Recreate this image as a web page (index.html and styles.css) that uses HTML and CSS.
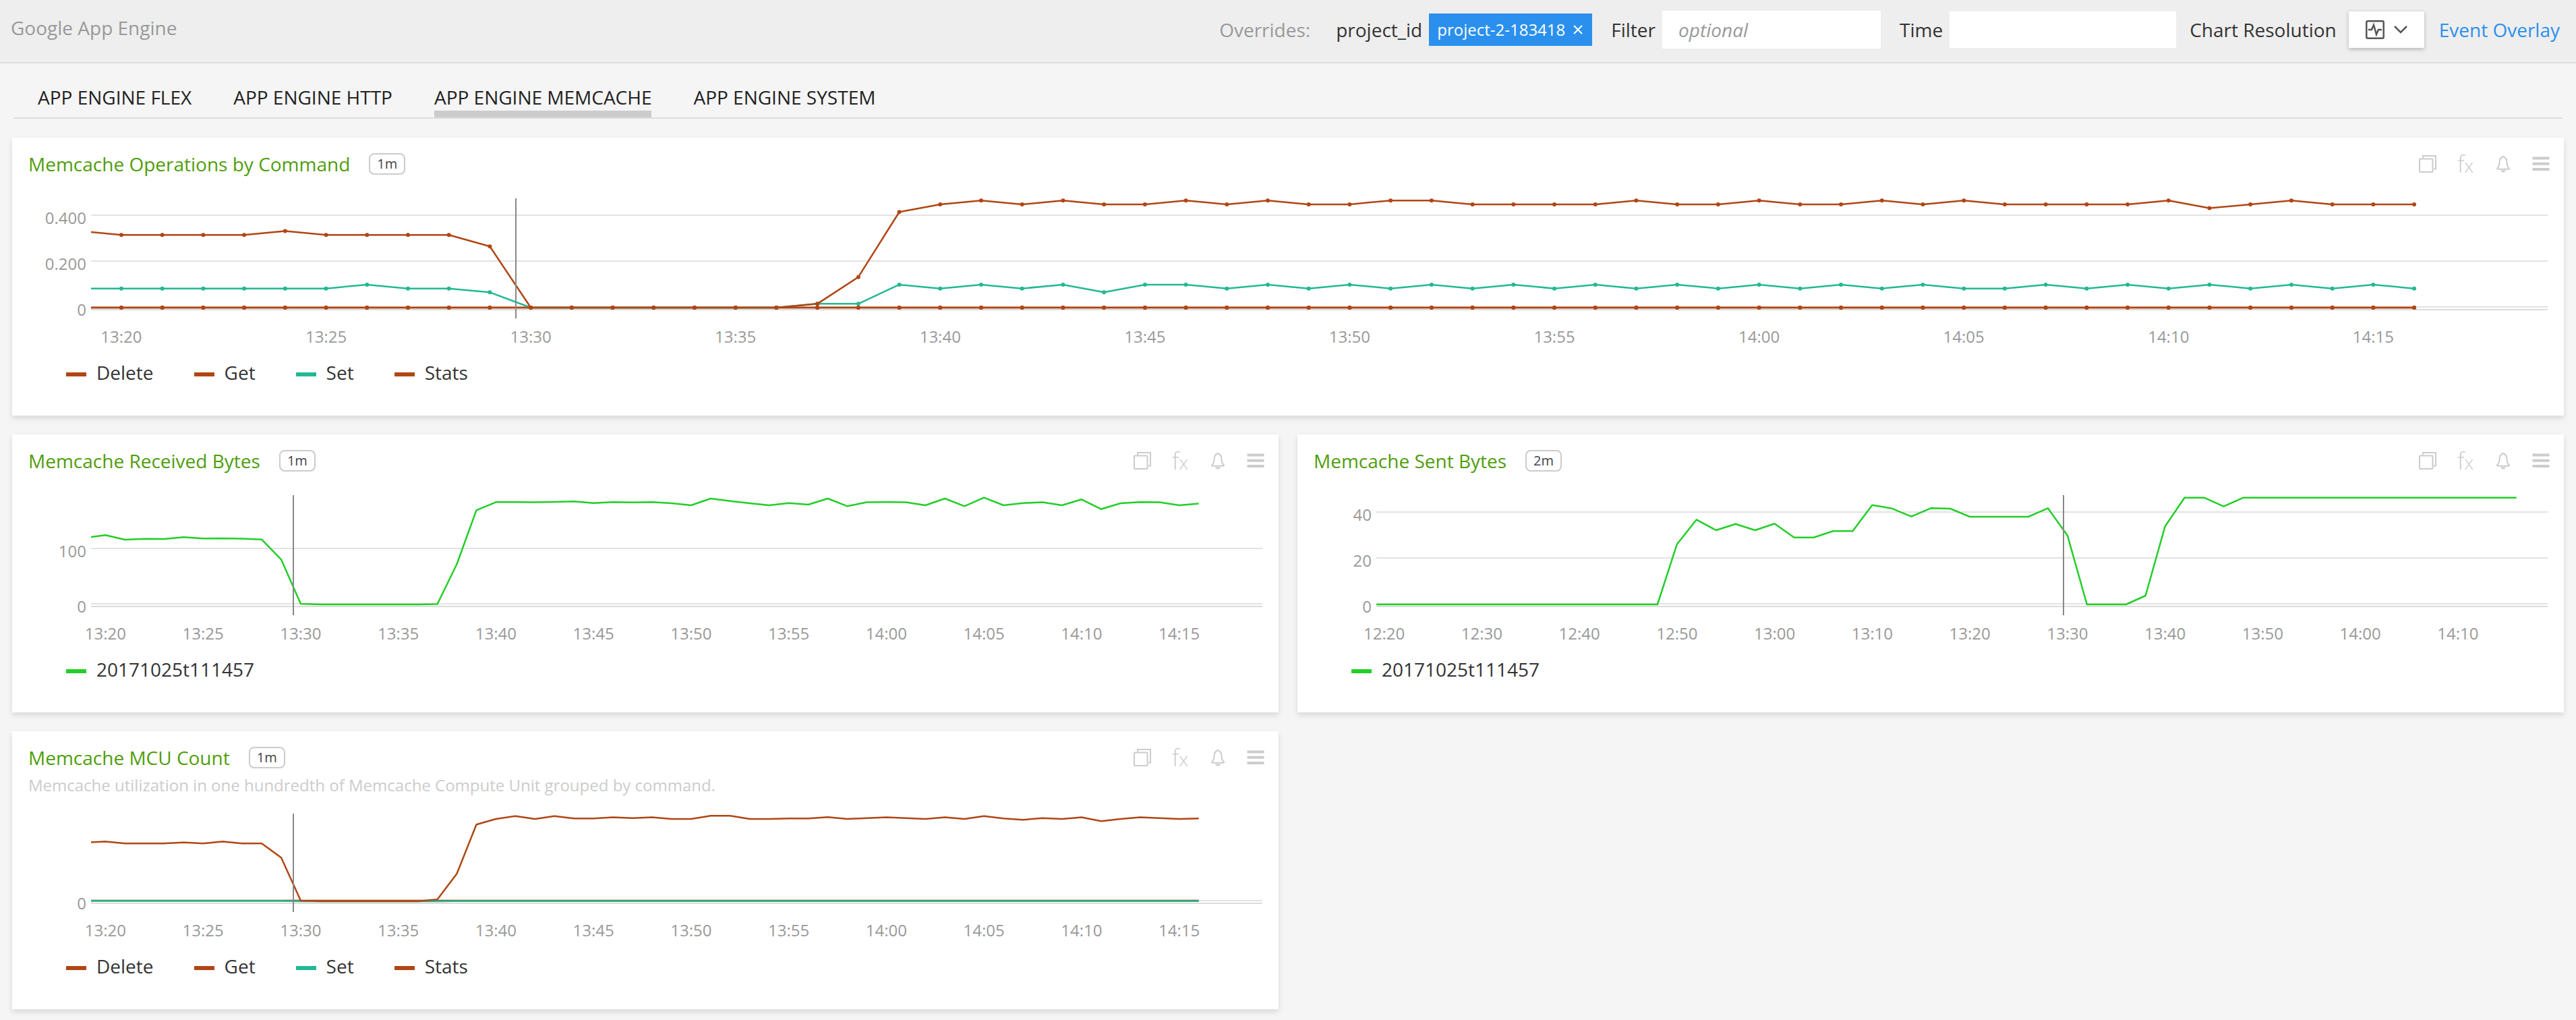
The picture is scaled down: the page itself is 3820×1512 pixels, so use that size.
FILE: index.html
```html
<!DOCTYPE html>
<html lang="en">
<head>
<meta charset="utf-8">
<title>Google App Engine</title>
<link rel="stylesheet" href="styles.css">
</head>
<body>
<svg class="sprite" aria-hidden="true">
  <symbol id="i-copy" viewBox="0 0 28 28"><path d="M7 5.500V2h19v19.500h-3" /><rect x="2" y="6.500" width="19.500" height="19.500" rx="1" /></symbol>
  <symbol id="i-bell" viewBox="0 0 28 28"><path d="M14 3c-4 1.500-5.500 5-5.500 9 0 4-1 6.500-3.500 8.500 0 1 .5 1.300 1.500 1.300h15c1 0 1.500-.3 1.500-1.300-2.500-2-3.500-4.500-3.500-8.500 0-4-1.500-7.500-5.500-9z" /><path class="solid" d="M10 23.500h8c-.8 2-2.200 3-4 3s-3.200-1-4-3z" /></symbol>
  <symbol id="i-menu" viewBox="0 0 28 28"><path class="solid" d="M1.500 3.500h25v4h-25zM1.500 11.800h25v4h-25zM1.500 20h25v4h-25z" /></symbol>
</svg>

<header class="topbar">
  <h1 class="topbar__title">Google App Engine</h1>
  <form class="filters">
    <span class="filters__hint">Overrides:</span>
    <div class="filters__group">
      <span>project_id</span>
      <button type="button" class="tag">project-2-183418
        <svg class="tag__x" viewBox="0 0 14 14" aria-hidden="true"><path d="M1 1l12 12M13 1L1 13" /></svg>
      </button>
    </div>
    <div class="filters__group">
      <label for="filter">Filter</label>
      <input id="filter" class="field" type="text" placeholder="optional">
    </div>
    <div class="filters__group">
      <label for="time">Time</label>
      <input id="time" class="field field--time" type="text">
    </div>
    <div class="filters__group filters__group--resolution">
      <span id="resolution-label">Chart Resolution</span>
      <button type="button" class="resolution" aria-labelledby="resolution-label">
        <svg width="28" height="28" viewBox="0 0 28 28" aria-hidden="true"><rect x="1.300" y="1.300" width="25.400" height="25.400" rx="2" /><path d="M4 14h5l3-7 4 14 3-7h5" /></svg>
        <svg width="20" height="12" viewBox="0 0 20 12" aria-hidden="true"><path d="M1 1l9 9 9-9" /></svg>
      </button>
    </div>
    <a class="overlay-link" href="#overlay">Event Overlay</a>
  </form>
</header>

<nav class="tabs">
  <a class="tab" href="#flex">APP ENGINE FLEX</a>
  <a class="tab" href="#http">APP ENGINE HTTP</a>
  <a class="tab tab--active" href="#memcache" aria-current="page">APP ENGINE MEMCACHE</a>
  <a class="tab" href="#system">APP ENGINE SYSTEM</a>
</nav>

<main class="grid">
  <section class="card card--wide">
    <div class="card__head">
      <h2 class="card__title">Memcache Operations by Command</h2>
      <span class="badge">1m</span>
      <div class="tools">
        <button type="button" class="tool" aria-label="Duplicate"><svg><use href="#i-copy" /></svg></button>
        <button type="button" class="tool tool--fx"><span>f</span>x</button>
        <button type="button" class="tool" aria-label="Alerts"><svg><use href="#i-bell" /></svg></button>
        <button type="button" class="tool" aria-label="Menu"><svg><use href="#i-menu" /></svg></button>
      </div>
    </div>
    <svg class="chart" data-chart="operations"></svg>
    <ul class="legend">
      <li class="brown">Delete</li><li class="brown">Get</li><li class="teal">Set</li><li class="brown">Stats</li>
    </ul>
  </section>

  <section class="card">
    <div class="card__head">
      <h2 class="card__title">Memcache Received Bytes</h2>
      <span class="badge">1m</span>
      <div class="tools">
        <button type="button" class="tool" aria-label="Duplicate"><svg><use href="#i-copy" /></svg></button>
        <button type="button" class="tool tool--fx"><span>f</span>x</button>
        <button type="button" class="tool" aria-label="Alerts"><svg><use href="#i-bell" /></svg></button>
        <button type="button" class="tool" aria-label="Menu"><svg><use href="#i-menu" /></svg></button>
      </div>
    </div>
    <svg class="chart" data-chart="received"></svg>
    <ul class="legend"><li class="green">20171025t111457</li></ul>
  </section>

  <section class="card">
    <div class="card__head">
      <h2 class="card__title">Memcache Sent Bytes</h2>
      <span class="badge">2m</span>
      <div class="tools">
        <button type="button" class="tool" aria-label="Duplicate"><svg><use href="#i-copy" /></svg></button>
        <button type="button" class="tool tool--fx"><span>f</span>x</button>
        <button type="button" class="tool" aria-label="Alerts"><svg><use href="#i-bell" /></svg></button>
        <button type="button" class="tool" aria-label="Menu"><svg><use href="#i-menu" /></svg></button>
      </div>
    </div>
    <svg class="chart" data-chart="sent"></svg>
    <ul class="legend"><li class="green">20171025t111457</li></ul>
  </section>

  <section class="card">
    <div class="card__head">
      <h2 class="card__title">Memcache MCU Count</h2>
      <span class="badge">1m</span>
      <div class="tools">
        <button type="button" class="tool" aria-label="Duplicate"><svg><use href="#i-copy" /></svg></button>
        <button type="button" class="tool tool--fx"><span>f</span>x</button>
        <button type="button" class="tool" aria-label="Alerts"><svg><use href="#i-bell" /></svg></button>
        <button type="button" class="tool" aria-label="Menu"><svg><use href="#i-menu" /></svg></button>
      </div>
    </div>
    <p class="card__desc">Memcache utilization in one hundredth of Memcache Compute Unit grouped by command.</p>
    <svg class="chart" data-chart="mcu"></svg>
    <ul class="legend">
      <li class="brown">Delete</li><li class="brown">Get</li><li class="teal">Set</li><li class="brown">Stats</li>
    </ul>
  </section>
</main>
<script src="charts.js"></script>
</body>
</html>
```

FILE: styles.css
```css
* { box-sizing: border-box; }

body {
  margin: 0;
  background: #f5f5f5;
  color: #333;
  font-family: "Open Sans", "Noto Sans", sans-serif;
  font-size: 28px;
  line-height: 40px;
}

button, input { font: inherit; color: inherit; border: 0; margin: 0; }
h1, h2, p, ul { margin: 0; padding: 0; font-weight: 400; font-size: 28px; }
a { color: inherit; text-decoration: none; }
button { cursor: pointer; }
.sprite { display: none; }

.topbar {
  display: flex;
  justify-content: space-between;
  align-items: center;
  height: 94px;
  padding: 0 24px 4px 16px;
  background: #eee;
  border-bottom: 2px solid #ddd;
}
.topbar__title { color: #999; padding-bottom: 6px; }

.filters { display: flex; align-items: center; gap: 28px; white-space: nowrap; }
.filters__hint { color: #999; margin-right: 10px; }
.filters__group { display: flex; align-items: center; gap: 10px; }
.filters__group--resolution { gap: 18px; margin-left: -8px; }

.tag {
  display: flex;
  align-items: center;
  gap: 12px;
  height: 48px;
  padding: 0 14px 0 12px;
  background: #2b90ed;
  color: #fff;
  font-size: 24px;
}
.tag__x { width: 14px; height: 14px; stroke: #fff; stroke-width: 2; fill: none; }

.field { width: 324px; height: 56px; padding: 0 24px; background: #fff; border-radius: 0; }
.field::placeholder { color: #999; font-style: italic; opacity: 1; }
.field--time { width: 336px; height: 54px; }

.resolution {
  display: flex;
  align-items: center;
  justify-content: center;
  gap: 14px;
  width: 112px;
  height: 54px;
  padding: 0;
  background: #fff;
  box-shadow: 0 2px 6px rgba(0, 0, 0, .25);
}
.resolution svg { fill: none; stroke: #555; stroke-width: 2.5; }
.overlay-link { color: #2b90ed; margin-left: -6px; }

.tabs {
  display: flex;
  gap: 62px;
  height: 82px;
  margin: 0 20px;
  padding: 30px 36px 0;
  border-bottom: 2px solid #ddd;
  color: #222;
}
.tab { border-bottom: 10px solid transparent; }
.tab--active { border-color: #ccc; }

.grid {
  display: grid;
  grid-template-columns: repeat(2, minmax(0, 1fr));
  gap: 28px;
  padding: 28px 18px 16px;
}
.card { padding: 18px 24px 44px; background: #fff; box-shadow: 0 4px 8px rgba(0, 0, 0, .12); }
.card--wide { grid-column: 1 / -1; }
.card__head { display: flex; align-items: center; height: 42px; }
.card__title { color: #4f9e0c; }
.card__desc { color: #ccc; font-size: 24px; }

.badge {
  height: 32px;
  margin-left: 28px;
  padding: 0 10px;
  border: 2px solid #ccc;
  border-radius: 8px;
  color: #444;
  font-size: 20px;
  line-height: 28px;
}

.tools { display: flex; gap: 28px; margin-left: auto; margin-right: -4px; }
.tool { width: 28px; height: 28px; padding: 0; background: none; color: #ccc; }
.tool svg { display: block; width: 28px; height: 28px; fill: none; stroke: #ccc; stroke-width: 2; }
.solid { fill: #ccc; stroke: none; }
.tool--fx { font-size: 28px; font-weight: 300; line-height: 28px; }
.tool--fx span { font-size: 34px; }

.chart { display: block; width: 100%; height: 220px; margin-top: 30px; }
.card__desc + .chart { height: 188px; margin-top: 22px; }
.chart text { fill: #999; font-size: 24px; }
.chart .grid-line { fill: #e2e2e2; }
.chart .axis-line { fill: #dcdcdc; }
.chart .marker { fill: #888; }
.chart .series { fill: none; stroke: currentColor; stroke-width: 2.5; stroke-linejoin: round; }
.chart .dot { fill: currentColor; }

.legend { display: flex; gap: 60px; margin-top: 18px; padding-left: 56px; list-style: none; }
.legend li { display: flex; align-items: center; gap: 15px; }
.legend li::before { content: ""; width: 30px; height: 6px; margin-top: 6px; background: currentColor; }
.legend .brown::before { background: #b04614; }
.legend .teal::before { background: #23b893; }
.legend .green::before { background: #23ce28; }
```

FILE: charts.js
```js
const BROWN = '#b04614', TEAL = '#23b893', GREEN = '#23ce28';
const fill = (n, v) => Array(n).fill(v);

// Times are minutes after midnight; `unit` is the height in pixels of one step in value.
const H13 = 13 * 60, EVENT = H13 + 29.63;

const getOps = [20, 19, 19, 19, 19, 20, 19, 19, 19, 19, 16, ...fill(7, 0), 1, 8, 25,
  27, 28, 27, 28, 27, 27, 28, 27, 28, 27, 27, 28, 28, 27, 27, 27, 27, 28, 27, 27,
  28, 27, 27, 28, 27, 28, 27, 27, 27, 27, 28, 26, 27, 28, 27, 27, 27];
const setOps = [5, 5, 5, 5, 5, 5, 5, 6, 5, 5, 4, ...fill(7, 0), 1, 1, 6,
  5, 6, 5, 6, 4, 6, 6, 5, 6, 5, 6, 5, 6, 5, 6, 5, 6, 5, 6, 5,
  6, 5, 6, 5, 6, 5, 5, 6, 5, 6, 5, 6, 5, 6, 5, 6, 5];

const received = [99, 102.7, 96, 97.3, 97, 99.7, 97.7, 98, 97.5, 96.3, 66.7, 1, ...fill(6, 0), .5, 60, 139.7,
  151.7, 151.8, 151.5, 152, 152.8, 150.3, 151.8, 151.3, 151.8, 150, 147, 157, 153.3, 150, 147, 150.3, 148, 157, 145.7, 151.5,
  151.8, 151.5, 147, 157, 145.7, 158.3, 147, 150.3, 151.5, 147, 155.7, 141.3, 150, 151.8, 151.6, 147, 149.5];

const sent = [...fill(16, 0), 89.3, 125.7, 110, 119.3, 110, 119.7, 99.3, 99.3, 108.7, 108.7,
  147.3, 142.3, 130.3, 142.7, 142, 130, 130, 130, 130, 142.7, 102.3, 0, 0, 0, 13, 115.7,
  158.3, 158.3, 145.3, ...fill(15, 158.2)];

const mcu = [87.3, 88.5, 85.7, 85.7, 85.7, 87.3, 85.7, 88.5, 85.7, 85.7, 64.7, 1, ...fill(6, 0), 2.7, 41, 113.7,
  122, 126.3, 122, 126.3, 122.7, 122.7, 124.5, 123.3, 124.5, 122, 122, 126.7, 126.7, 122, 122, 122.7, 122.7, 124.7, 122, 123.3,
  124.5, 123.3, 122, 124.5, 122, 126.3, 122.7, 120.8, 123.3, 122, 124.5, 118.8, 122, 124.5, 123.3, 122, 122.7];

const charts = {
  operations: {
    start: H13 + 19.26, span: 60, first: H13 + 19, step: 1, tick: 5, unit: 5.67, dots: true,
    grid: [[68, '0.200'], [136, '0.400']],
    series: [[BROWN, fill(58, 0)], [TEAL, setOps], [BROWN, getOps], [BROWN, fill(58, 0)]]
  },
  received: {
    start: H13 + 19.26, span: 60, first: H13 + 19, step: 1, tick: 5, unit: 1,
    grid: [[82, '100']], series: [[GREEN, received]]
  },
  sent: {
    start: 12 * 60 + 19.2, span: 120, first: 12 * 60 + 18, step: 2, tick: 10, unit: 1,
    grid: [[68, '20'], [136, '40']], series: [[GREEN, sent]]
  },
  mcu: {
    start: H13 + 19.26, span: 60, first: H13 + 19, step: 1, tick: 5, unit: 1, grid: [],
    series: [[BROWN, fill(58, 1)], [TEAL, [...fill(11, .5), ...fill(8, 0), ...fill(39, .3)]], [BROWN, mcu]]
  }
};

const clock = m => Math.floor(m / 60) + ':' + String(m % 60).padStart(2, '0');

function draw(svg) {
  const c = charts[svg.dataset.chart];
  const { width, height } = svg.getBoundingClientRect();
  const left = 93, zero = height - 58, plot = width - left;
  const x = m => left + (m - c.start) / c.span * plot;
  const clip = 'clip-' + svg.dataset.chart;
  let out = `<clipPath id="${clip}"><rect x="${left}" y="0" width="${plot}" height="${height}"/></clipPath>`;

  for (const [h, label] of [[0, '0'], ...c.grid]) {
    const y = zero - h;
    out += `<rect class="grid-line" x="${left}" y="${y - 2}" width="${plot}" height="2"/>`;
    out += `<text x="${left - 7}" y="${y + 12}" text-anchor="end">${label}</text>`;
  }
  out += `<rect class="axis-line" x="${left}" y="${zero + 2}" width="${plot}" height="2"/>`;

  const last = c.first + (c.series[0][1].length - 1) * c.step;
  for (let m = Math.ceil(c.start / c.tick) * c.tick; m <= last; m += c.tick) {
    out += `<text x="${x(m)}" y="${height - 6}" text-anchor="middle">${clock(m)}</text>`;
  }

  for (const [color, values] of c.series) {
    const pts = values.map((v, i) => [x(c.first + i * c.step), zero - v * c.unit]);
    out += `<g color="${color}" clip-path="url(#${clip})"><polyline class="series" points="${pts.join(' ')}"/>`;
    if (c.dots) out += pts.map(p => `<circle class="dot" cx="${p[0]}" cy="${p[1]}" r="3"/>`).join('');
    out += '</g>';
  }
  out += `<rect class="marker" x="${Math.round(x(EVENT)) - 1}" y="0" width="2" height="${height - 42}"/>`;
  svg.innerHTML = out;
}

const drawAll = () => document.querySelectorAll('.chart').forEach(draw);
drawAll();
window.addEventListener('resize', drawAll);
```
